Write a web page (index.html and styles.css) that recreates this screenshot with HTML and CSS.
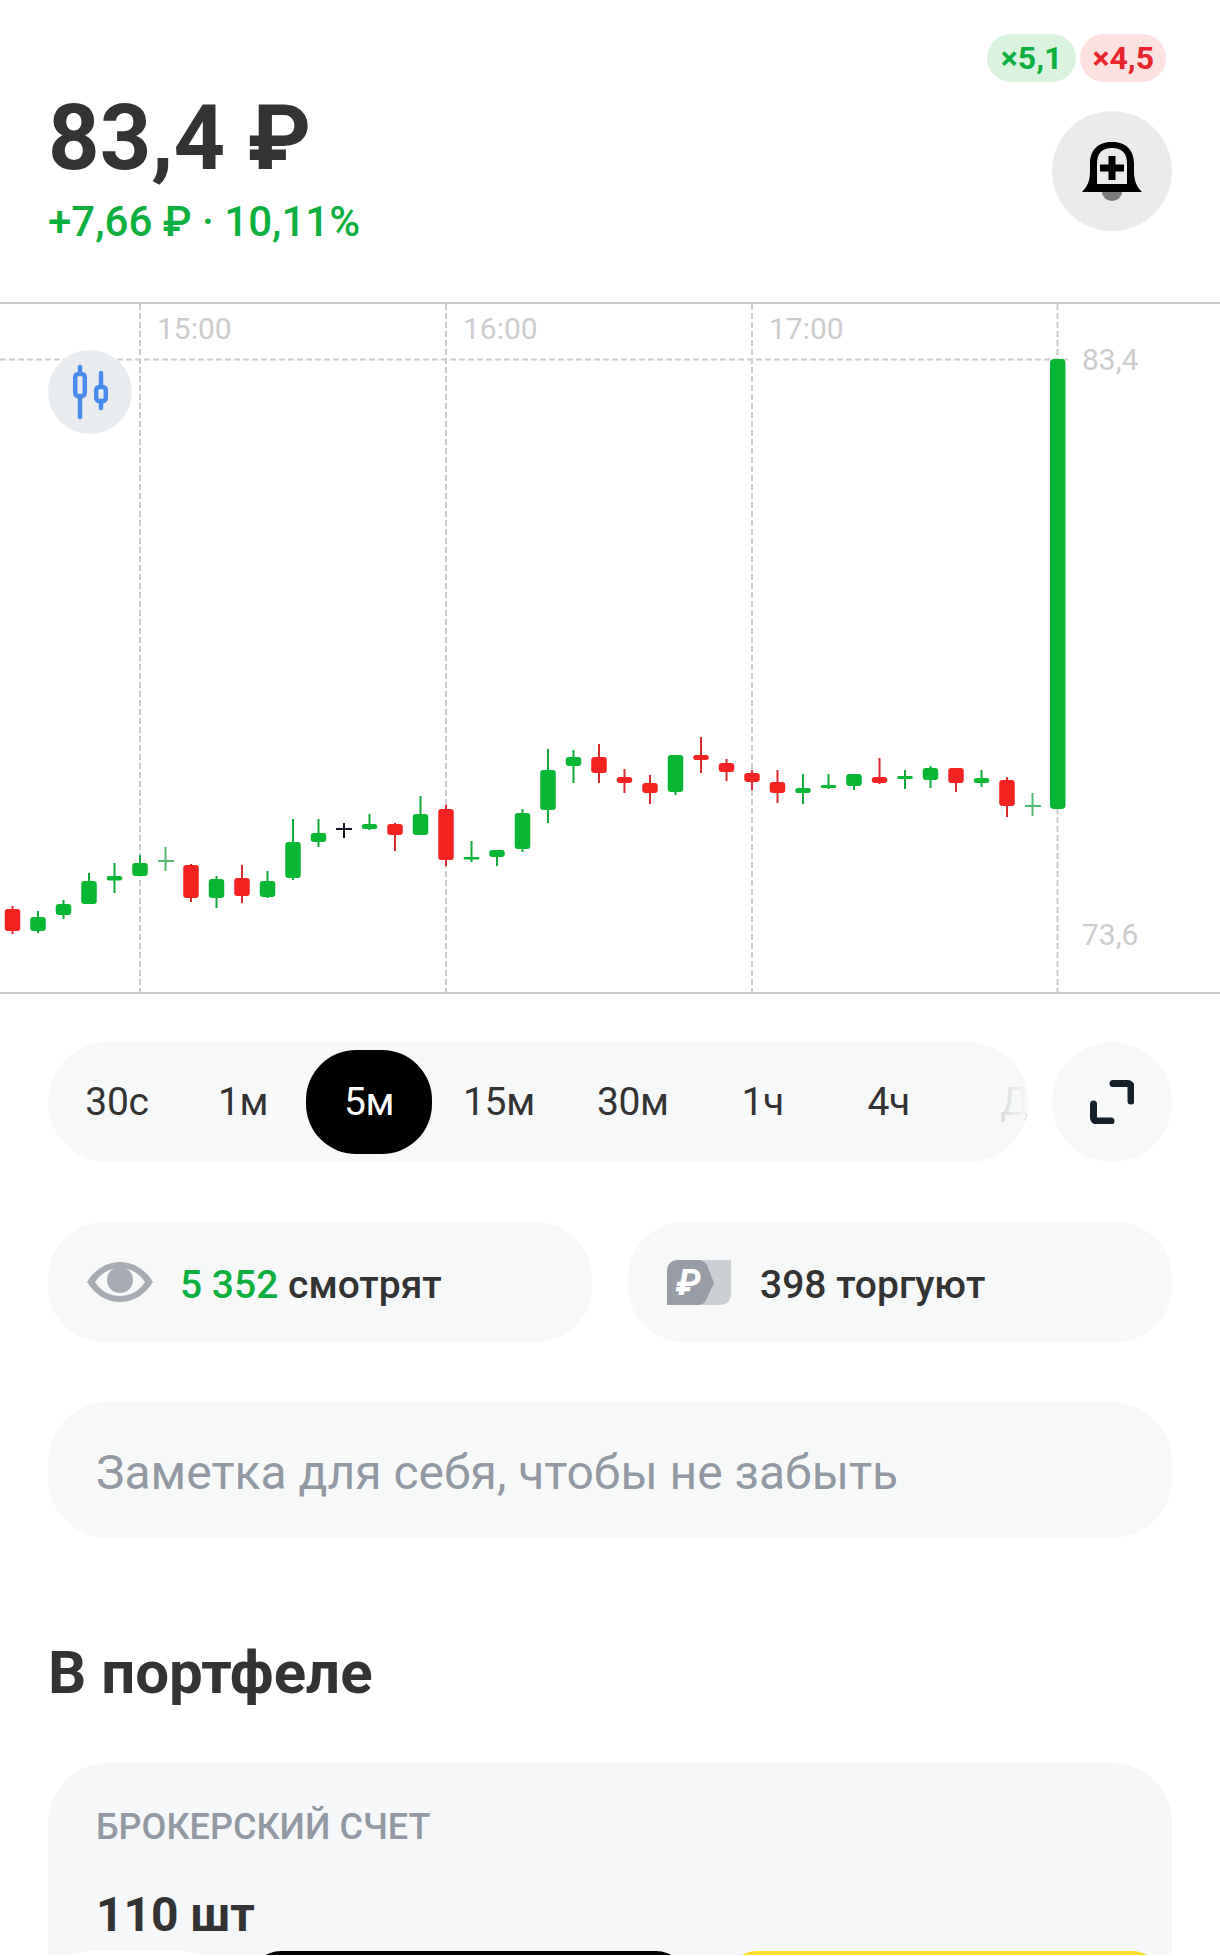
FILE: index.html
```html
<!DOCTYPE html>
<html lang="ru">
  <head>
    <meta charset="UTF-8" />
    <meta name="viewport" content="width=device-width, initial-scale=1.0" />
    <title>83,4 ₽</title>
    <link rel="stylesheet" href="styles.css">
  </head>
  <body>
    <header class="quote">
      <div class="price-block">
        <div class="price">83,4 ₽</div>
        <div class="change">+7,66 ₽ · 10,11%</div>
      </div>
      <div class="quote-side">
        <div class="leverage">
          <span class="lev lev-long">×5,1</span>
          <span class="lev lev-short">×4,5</span>
        </div>
        <button class="bell" type="button" aria-label="alert">
          <svg width="60" height="60" viewBox="0 0 60 60">
            <path d="M20 51a10 9 0 0 0 20 0z" fill="#7b7b7b" />
            <path fill-rule="evenodd" d="M0 51C6 45 8 39 8 30V23C8 8 17 1 30 1s22 7 22 22v7c0 9 2 15 8 21zM15 43H45V23C45 12 40 7 30 7S15 12 15 23z" fill="#000" />
            <path d="M26.500 15h7v8.500H42v7h-8.500V39h-7v-8.500H18v-7h8.500z" fill="#000" />
          </svg>
        </button>
      </div>
    </header>

    <section class="chart">
      <svg class="chart-svg" width="1220" height="688" viewBox="0 304 1220 688">
        <g class="grid">
          <path d="M0 359.500H1068" />
          <path d="M140 304V992M446 304V992M752 304V992M1057.500 304V992" />
        </g>
        <g class="axis">
          <text x="157" y="339">15:00</text>
          <text x="463" y="339">16:00</text>
          <text x="769" y="339">17:00</text>
          <text x="1082" y="370">83,4</text>
          <text x="1082" y="945">73,6</text>
        </g>
        <g class="wicks up">
          <path d="M38 911V933M63.500 900V919M89 873V904M114.500 863V893M140 855V876M216.500 876V908M267.500 871V898M293 819V880M318.500 819V847M369.500 814V830M420.500 796V835M471.500 841V862" />
          <path d="M497 850V866M522.500 809V852M548 749V823M573.500 750V783M675.500 755V795M803 774V804M828.500 774V789M854 774V790M905 770V789M930.500 766V788M981.500 770V787" />
        </g>
        <g class="wicks down">
          <path d="M12.500 906V934M191 864V902M242 865V903M395 823V851M446 805V866M599 744V783M624.500 769V793M650 775V804M701 737V773M726.500 759V781M752 770V790M777.500 770V803M879.500 758V784M956 768V792M1007 777V817" />
        </g>
        <g class="wicks thin">
          <path d="M165.500 847V871M1032.500 793V816" />
          <path d="M158 861H174M1025 806H1041" />
        </g>
        <path class="cross" d="M344 823V838M336 829H352" />
        <g class="bodies up">
          <rect x="30.250" y="917" width="15.500" height="14" rx="3" />
          <rect x="55.750" y="904" width="15.500" height="11" rx="3" />
          <rect x="81.250" y="881" width="15.500" height="23" rx="3" />
          <rect x="106.750" y="876" width="15.500" height="4.500" rx="2.200" />
          <rect x="132.250" y="863" width="15.500" height="13" rx="3" />
          <rect x="208.750" y="879" width="15.500" height="19" rx="3" />
          <rect x="259.750" y="881" width="15.500" height="16" rx="3" />
          <rect x="285.250" y="842" width="15.500" height="36" rx="3" />
          <rect x="310.750" y="833" width="15.500" height="9" rx="3" />
          <rect x="361.750" y="824" width="15.500" height="5" rx="2.500" />
          <rect x="412.750" y="814" width="15.500" height="21" rx="3" />
          <rect x="463.750" y="857" width="15.500" height="2.500" />
          <rect x="489.250" y="850" width="15.500" height="7" rx="3" />
          <rect x="514.750" y="813" width="15.500" height="36" rx="3" />
          <rect x="540.250" y="770" width="15.500" height="40" rx="3" />
          <rect x="565.750" y="757" width="15.500" height="9" rx="3" />
          <rect x="667.750" y="755" width="15.500" height="37" rx="3" />
          <rect x="795.250" y="788" width="15.500" height="5" rx="2.500" />
          <rect x="820.750" y="785" width="15.500" height="3" rx="1.500" />
          <rect x="846.250" y="774" width="15.500" height="12" rx="3" />
          <rect x="897.250" y="776" width="15.500" height="3" rx="1.500" />
          <rect x="922.750" y="768" width="15.500" height="12" rx="3" />
          <rect x="973.750" y="778" width="15.500" height="5" rx="2.500" />
          <rect x="1050" y="359" width="15.500" height="450" rx="4" />
        </g>
        <g class="bodies down">
          <rect x="4.750" y="909" width="15.500" height="22" rx="3" />
          <rect x="183.250" y="865" width="15.500" height="33" rx="3" />
          <rect x="234.250" y="878" width="15.500" height="18" rx="3" />
          <rect x="387.250" y="824" width="15.500" height="11" rx="3" />
          <rect x="438.250" y="809" width="15.500" height="51" rx="3" />
          <rect x="591.250" y="757" width="15.500" height="16" rx="3" />
          <rect x="616.750" y="777" width="15.500" height="6" rx="3" />
          <rect x="642.250" y="783" width="15.500" height="10" rx="3" />
          <rect x="693.250" y="755" width="15.500" height="5" rx="2.500" />
          <rect x="718.750" y="763" width="15.500" height="9" rx="3" />
          <rect x="744.250" y="773" width="15.500" height="9" rx="3" />
          <rect x="769.750" y="782" width="15.500" height="11" rx="3" />
          <rect x="871.750" y="777" width="15.500" height="6" rx="3" />
          <rect x="948.250" y="768" width="15.500" height="15" rx="3" />
          <rect x="999.250" y="780" width="15.500" height="26" rx="3" />
        </g>
      </svg>
      <button class="chart-type" type="button" aria-label="chart type">
        <svg width="50" height="56" viewBox="0 0 50 56">
          <path d="M15 3V10M15 32V53M36 9V23M36 37V44" />
          <rect x="10.200" y="10" width="9.600" height="22" rx="3" />
          <rect x="31.200" y="23" width="9.600" height="14" rx="3" />
        </svg>
      </button>
    </section>

    <section class="timeframes">
      <div class="tf-bar">
        <span class="tf">30с</span>
        <span class="tf">1м</span>
        <span class="tf tf-active">5м</span>
        <span class="tf">15м</span>
        <span class="tf">30м</span>
        <span class="tf">1ч</span>
        <span class="tf">4ч</span>
        <span class="tf">Д</span>
      </div>
      <button class="round-btn" type="button" aria-label="fullscreen">
        <svg width="44" height="44" viewBox="0 0 44 44">
          <path d="M23 3.500H38a3 3 0 0 1 3 3V21M3.500 24V38a3 3 0 0 0 3 3H21" />
        </svg>
      </button>
    </section>

    <section class="stats">
      <div class="stat">
        <svg class="stat-eye" width="66" height="40" viewBox="0 0 66 40">
          <path fill-rule="evenodd" d="M0 20C8 7 20 0 33 0s25 7 33 20c-8 13-20 20-33 20S8 33 0 20zM8 20c6 9 15 14 25 14s19-5 25-14C52 11 43 6 33 6S14 11 8 20z" fill="#a8abb2" />
          <circle cx="33" cy="18" r="13" fill="#a8abb2" />
        </svg>
        <span class="stat-text"><span class="green">5 352</span> смотрят</span>
      </div>
      <div class="stat">
        <svg class="stat-badge" width="64" height="45" viewBox="0 0 64 45">
          <path d="M20 0H64V35a10 10 0 0 1-10 10H20z" fill="#ccd0d5" />
          <path d="M10 0H31C35 0 38 2 40 5L47 23 40 38C38 43 35 45 31 45H0V10A10 10 0 0 1 10 0z" fill="#989ca6" />
          <text class="badge-rub" x="9" y="35">₽</text>
        </svg>
        <span class="stat-text">398 торгуют</span>
      </div>
    </section>

    <div class="note">Заметка для себя, чтобы не забыть</div>

    <h2 class="section-title">В портфеле</h2>

    <section class="card">
      <div class="card-label">БРОКЕРСКИЙ СЧЕТ</div>
      <div class="card-qty">110 шт</div>
      <div class="card-actions">
        <span class="act act-white"></span>
        <span class="act act-black"></span>
        <span class="act act-yellow"></span>
      </div>
    </section>
  </body>
</html>
```

FILE: styles.css
```css
* {
  box-sizing: border-box;
}
html,
body {
  height: 1956px;
  overflow: hidden;
}
body {
  margin: 0;
  background: #fff;
  font-family: Roboto, "Liberation Sans", sans-serif;
  color: #333;
}
button {
  border: none;
  padding: 0;
  font: inherit;
}

.quote {
  display: flex;
  justify-content: space-between;
  height: 302px;
  padding: 34px 48px 0;
}
.price-block {
  padding-top: 52px;
}
.price {
  font-size: 90px;
  font-weight: 700;
  line-height: 106px;
}
.change {
  margin-top: 6px;
  font-size: 42px;
  font-weight: 500;
  line-height: 48px;
  color: #0db03f;
}
.quote-side {
  display: flex;
  flex-direction: column;
  align-items: flex-end;
  gap: 29px;
}
.leverage {
  display: flex;
  gap: 4px;
  margin-right: 6px;
}
.lev {
  height: 48px;
  padding: 0 12px;
  border-radius: 24px;
  font-size: 32px;
  font-weight: 700;
  line-height: 48px;
}
.lev-long {
  padding: 0 14px;
  background: #d9f3df;
  color: #0db03f;
}
.lev-short {
  background: #fde0e0;
  color: #e7252b;
}
.bell {
  display: flex;
  align-items: center;
  justify-content: center;
  width: 120px;
  height: 120px;
  border-radius: 50%;
  background: #e9ebed;
}

.chart {
  position: relative;
  height: 692px;
  border-top: 2px solid #ccc;
  border-bottom: 2px solid #ccc;
}
.chart-svg {
  display: block;
}
.grid path {
  fill: none;
  stroke: #ccc;
  stroke-width: 2;
  stroke-dasharray: 6 3;
}
.axis text {
  font-size: 30px;
  fill: #ccc;
}
.wicks path {
  fill: none;
  stroke-width: 2;
}
.wicks.up path {
  stroke: #12ab3b;
}
.wicks.down path {
  stroke: #d92b2f;
}
.wicks.thin path {
  stroke: #53b871;
}
.cross {
  fill: none;
  stroke: #14172a;
  stroke-width: 2;
}
.bodies.up rect {
  fill: #07b733;
}
.bodies.down rect {
  fill: #f52222;
}
.chart-type {
  position: absolute;
  left: 48px;
  top: 46px;
  display: flex;
  align-items: center;
  justify-content: center;
  width: 84px;
  height: 84px;
  border-radius: 50%;
  background: #e9ecef;
}
.chart-type svg {
  fill: none;
  stroke: #4a8bee;
  stroke-width: 4.500;
  stroke-linecap: round;
}

.timeframes {
  display: flex;
  gap: 24px;
  margin: 48px 48px 0;
}
.tf-bar {
  position: relative;
  display: flex;
  flex: 1;
  align-items: center;
  height: 120px;
  padding-left: 6px;
  border-radius: 60px;
  background: #f7f9f9;
  overflow: hidden;
}
.tf-bar::after {
  content: "";
  position: absolute;
  top: 0;
  right: 0;
  bottom: 0;
  width: 90px;
  background: linear-gradient(to right, rgba(247, 249, 249, 0), rgba(247, 249, 249, 0.85) 70%, #f7f9f9);
}
.tf {
  flex: none;
  min-width: 126px;
  height: 104px;
  padding: 0 31px;
  border-radius: 50px;
  font-size: 39px;
  letter-spacing: -0.3px;
  line-height: 104px;
  text-align: center;
}
.tf-active {
  background: #000;
  color: #fff;
}
.round-btn {
  display: flex;
  flex: none;
  align-items: center;
  justify-content: center;
  width: 120px;
  height: 120px;
  border-radius: 50%;
  background: #f7f9f9;
}
.round-btn svg {
  fill: none;
  stroke: #15202b;
  stroke-width: 7;
  stroke-linecap: round;
}

.stats {
  display: flex;
  gap: 36px;
  margin: 60px 48px 0;
}
.stat {
  display: flex;
  flex: 1;
  align-items: center;
  height: 120px;
  padding-left: 39px;
  border-radius: 56px;
  background: #f7f9f9;
  font-size: 39px;
  font-weight: 500;
}
.stat-text {
  padding-top: 6px;
}
.stat-eye {
  margin-right: 27px;
}
.stat-badge {
  margin-right: 29px;
}
.badge-rub {
  font-size: 36px;
  font-style: italic;
  font-weight: 700;
  fill: #fff;
}
.green {
  color: #0db03f;
}

.note {
  height: 136px;
  margin: 60px 48px 0;
  padding-left: 48px;
  border-radius: 60px;
  background: #f7f9f9;
  font-size: 48px;
  line-height: 142px;
  color: #9299a2;
}
.section-title {
  margin: 105px 48px 0;
  font-size: 60px;
  font-weight: 700;
  line-height: 60px;
}
.card {
  height: 192px;
  margin: 60px 48px 0;
  padding: 44px 48px 0;
  border-radius: 60px 60px 0 0;
  background: #f5f7f9;
  overflow: hidden;
}
.card-label {
  font-size: 36px;
  font-weight: 500;
  line-height: 40px;
  color: #9299a2;
}
.card-qty {
  margin-top: 42px;
  font-size: 48px;
  font-weight: 700;
  line-height: 52px;
}
.card-actions {
  display: flex;
  margin: 10px 0 0 -36px;
}
.act {
  flex: none;
  height: 60px;
  border-radius: 30px;
}
.act-white {
  width: 152px;
  background: #fff;
}
.act-black {
  width: 435px;
  margin-left: 39px;
  background: #000;
}
.act-yellow {
  width: 435px;
  margin-left: 41px;
  background: #ffdd2d;
}
```
